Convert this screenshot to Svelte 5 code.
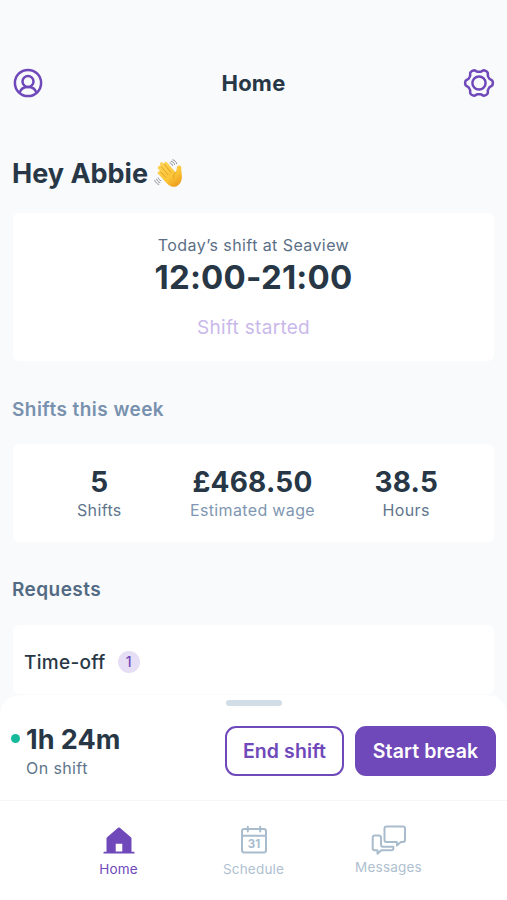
<script lang="ts">
	// Weekly totals
	const stats = [
		{ value: '5', label: 'Shifts', kind: 'shifts' },
		{ value: '£468.50', label: 'Estimated wage', kind: 'wage' },
		{ value: '38.5', label: 'Hours', kind: 'hours' }
	];

	// Six-lobed outline for the settings icon
	function gearPath(cx: number, cy: number, radius: number, depth: number) {
		let d = '';
		for (let i = 0; i < 180; i++) {
			const a = (i / 180) * Math.PI * 2;
			const c = Math.cos(a * 6);
			// flatten the lobes and the notches a little
			const r = radius + depth * Math.tanh(c * 1.6);
			d += `${i ? 'L' : 'M'}${(cx + r * Math.cos(a)).toFixed(2)} ${(cy + r * Math.sin(a)).toFixed(2)}`;
		}
		return d + 'Z';
	}

	const gear = gearPath(16, 16, 12.5, 1.45);
</script>

<div class="app">
	<main class="content">
		<header>
			<button class="icon-button" aria-label="Profile">
				<svg width="32" height="32" viewBox="0 0 32 32">
					<circle cx="16" cy="16" r="13.1" />
					<circle cx="16" cy="14.4" r="5.5" />
					<path d="M7.6 25.6c1.1-3.600 4.300-5.600 8.400-5.600s7.300 2 8.400 5.600" />
				</svg>
			</button>
			<h1>Home</h1>
			<button class="icon-button" aria-label="Settings">
				<svg width="32" height="32" viewBox="0 0 32 32">
					<path d={gear} />
					<circle cx="16" cy="16" r="6.600" />
				</svg>
			</button>
		</header>

		<div class="greeting">
			<h2>Hey Abbie</h2>
			<svg class="wave" width="32" height="30" viewBox="0 0 32 30" role="img" aria-label="Waving hand">
				<defs>
					<linearGradient id="skin" x1="0" y1="0" x2="0.7" y2="1">
						<stop offset="0" stop-color="#ffd65a" />
						<stop offset="0.65" stop-color="#fbc638" />
						<stop offset="1" stop-color="#eda11f" />
					</linearGradient>
				</defs>
				<path
					fill="url(#skin)"
					d="M9.4 20.4 4.2 15.1c-.9-.9-.7-2 .1-2.6.8-.6 1.6-.3 2.3.3L4.3 9.9c-.8-1-.5-2.2.3-2.8.9-.6 1.8-.3 2.5.5L6.3 6.2c-.7-1.1-.4-2.2.4-2.7.9-.6 2-.2 2.6.6l1 1.1c-.4-.9 0-1.8.8-2.2.9-.4 1.8.1 2.4.9l7.3 8.7c.5.6 1.1.5 1.3-.2l.9-4.1c.3-1.4 1.3-2 2.5-1.8 1.2.2 1.900 1.200 1.800 2.500-.2 3.300.6 5.500.6 8.400 0 3.400-1 6.200-3.400 8.500-4.600 4.200-9.800 1.200-15.100-5.500Z"
				/>
				<path class="crease" d="m7.1 7.6 6.9 8.2M10.3 5.2l6.7 8.4M6.6 12.8l5.1 5.5M22.2 12.8c-2.4 1.6-3.3 3.7-2.6 6.2" />
				<path class="motion" d="M17.2 2.2c1.7.3 2.9 1.5 3.3 3.2M19 .8c1.900.6 3.200 2 3.700 3.800M15.900 4c1.400.3 2.200 1.100 2.600 2.400M.8 21.500c.7 2 2.100 3.300 4 3.900M2.600 20.200c.6 1.700 1.700 2.800 3.300 3.400M4.200 18.900c.5 1.400 1.400 2.300 2.700 2.800" />
			</svg>
		</div>

		<section class="card today">
			<p class="place">Today’s shift at Seaview</p>
			<p class="time">12:00-21:00</p>
			<p class="status">Shift started</p>
		</section>

		<h3 class="week-title">Shifts this week</h3>
		<section class="card stats">
			{#each stats as stat}
				<div class="stat {stat.kind}">
					<strong>{stat.value}</strong>
					<span>{stat.label}</span>
				</div>
			{/each}
		</section>

		<h3 class="requests-title">Requests</h3>
		<section class="card request">
			<span class="request-name">Time-off</span>
			<span class="badge">1</span>
		</section>
	</main>

	<section class="sheet">
		<div class="handle"></div>
		<div class="sheet-row">
			<div class="timer">
				<i class="dot"></i>
				<div>
					<strong>1h 24m</strong>
					<span>On shift</span>
				</div>
			</div>
			<button class="action outline">End shift</button>
			<button class="action filled">Start break</button>
		</div>
	</section>

	<nav>
		<a class="tab home" href="#home">
			<svg width="32" height="28" viewBox="0 0 32 28">
				<path
					fill="currentColor"
					fill-rule="evenodd"
					d="M15.1.8a1.4 1.4 0 0 1 1.8 0L27.600 9.900c.6.5.9 1.100.9 1.900v12.900h2.300c.5 0 .7.3.7.8v1.100H.5v-1.100c0-.5.2-.8.7-.8h2.300V11.800c0-.8.3-1.400.9-1.900ZM12.700 16.800v7.700h6.600v-7.700Z"
				/>
			</svg>
			<span>Home</span>
		</a>
		<a class="tab schedule" href="#schedule">
			<svg width="28" height="30" viewBox="0 0 28 30">
				<rect x="2" y="4" width="24" height="23.5" rx="2.2" />
				<path d="M2 10.7h24M7.8 1.800v4.700M20.200 1.800v4.700" />
				<text x="14" y="23.2" text-anchor="middle">31</text>
			</svg>
			<span>Schedule</span>
		</a>
		<a class="tab messages" href="#messages">
			<svg width="36" height="30" viewBox="0 0 36 30">
				<path d="M15.5 1.5h16.500a2 2 0 0 1 2 2v11.500a2 2 0 0 1-2 2h-2.200l-3.900 3.600v-3.600H15.500a2 2 0 0 1-2-2V3.500a2 2 0 0 1 2-2Z" />
				<path d="M8.600 10.500H3.700a2 2 0 0 0-2 2v10.800a2 2 0 0 0 2 2h2.800v3.500l3.900-3.500h10a2 2 0 0 0 2-2v-1.500H12a2 2 0 0 1-2-2V12Z" />
			</svg>
			<span>Messages</span>
		</a>
	</nav>
</div>

<style>
	:global(body) {
		margin: 0;
		background: #f8fafc;
	}

	.app {
		width: 507px;
		height: 900px;
		display: flex;
		flex-direction: column;
		overflow: hidden;
		background: #f8fafc;
		color: #273746;
		font-family: Inter, 'Liberation Sans', sans-serif;
	}

	h1,
	h2,
	h3,
	p {
		margin: 0;
	}

	button {
		font: inherit;
		cursor: pointer;
	}

	.content {
		height: 695px;
		flex: none;
		padding: 66px 12px 0;
		box-sizing: border-box;
		overflow: hidden;
	}

	header {
		display: flex;
		align-items: center;
		justify-content: space-between;
		height: 33px;
	}

	h1 {
		font-size: 22px;
		line-height: 34px;
		font-weight: 650;
		letter-spacing: 0.2px;
	}

	.icon-button {
		padding: 0;
		border: 0;
		background: none;
		display: flex;
	}

	.icon-button svg {
		fill: none;
		stroke: #6f48ba;
		stroke-width: 2.5;
		stroke-linejoin: round;
	}

	/* Greeting */
	.greeting {
		display: flex;
		align-items: center;
		gap: 6px;
		height: 34px;
		margin-top: 58px;
	}

	h2 {
		font-size: 27px;
		line-height: 34px;
		font-weight: 650;
		letter-spacing: 0;
	}

	.crease {
		fill: none;
		stroke: #e29a20;
		stroke-width: 0.9;
		stroke-linecap: round;
	}

	.motion {
		fill: none;
		stroke: #7e8288;
		stroke-width: 0.9;
		stroke-linecap: round;
	}

	/* Cards */
	.card {
		margin: 0 1px;
		background: #fff;
		border-radius: 6px;
		box-sizing: border-box;
	}

	.today {
		height: 148px;
		margin-top: 22px;
		padding-top: 21px;
		text-align: center;
	}

	.place {
		font-size: 16px;
		line-height: 22px;
		letter-spacing: 0.42px;
		color: #5b6f86;
	}

	.time {
		font-size: 33px;
		line-height: 42px;
		font-weight: 700;
		letter-spacing: 0.2px;
	}

	.status {
		margin-top: 17px;
		font-size: 19px;
		line-height: 26px;
		letter-spacing: 0.3px;
		color: #c9b9ea;
	}

	h3 {
		font-size: 19px;
		line-height: 26px;
		font-weight: 600;
		letter-spacing: 0.45px;
	}

	.week-title {
		margin-top: 36px;
		color: #7891ae;
	}

	.requests-title {
		margin-top: 35px;
		color: #526a83;
	}

	.stats {
		height: 98px;
		margin-top: 21px;
		padding: 22px 56px 0 64px;
		display: flex;
		justify-content: space-between;
	}

	.stat {
		display: flex;
		flex-direction: column;
		align-items: center;
	}

	.stat strong {
		font-size: 28px;
		line-height: 32px;
		font-weight: 700;
		letter-spacing: 0.2px;
	}

	.stat span {
		font-size: 16px;
		line-height: 24px;
		letter-spacing: 0.35px;
		color: #60758c;
	}

	.wage {
		margin-left: 9px;
	}

	.wage span {
		color: #7f97b2;
	}

	.request {
		height: 69px;
		margin-top: 22px;
		padding: 5px 11px 0;
		display: flex;
		align-items: center;
		gap: 12px;
	}

	.request-name {
		font-size: 19px;
		font-weight: 550;
		letter-spacing: 0.3px;
	}

	.badge {
		width: 22px;
		height: 22px;
		border-radius: 50%;
		background: #e6def4;
		color: #6f48ba;
		font-size: 14px;
		line-height: 22px;
		font-weight: 500;
		text-align: center;
	}

	/* Current shift */
	.sheet {
		height: 106px;
		flex: none;
		box-sizing: border-box;
		border-bottom: 1px solid #f3f6f8;
		border-radius: 20px 20px 0 0;
		background: #fff;
	}

	.handle {
		width: 56px;
		height: 6px;
		margin: 5px auto 0;
		border-radius: 3px;
		background: #d1dee7;
	}

	.sheet-row {
		display: flex;
		align-items: center;
		margin-top: 17px;
		padding: 0 11px;
	}

	.timer {
		display: flex;
		flex: 1;
		gap: 6px;
	}

	.timer div {
		display: flex;
		flex-direction: column;
	}

	.timer strong {
		font-size: 27px;
		line-height: 34px;
		font-weight: 700;
	}

	.timer span {
		font-size: 16px;
		line-height: 22px;
		letter-spacing: 0.4px;
		color: #60758c;
	}

	.dot {
		width: 9px;
		height: 9px;
		margin-top: 11px;
		border-radius: 50%;
		background: #16b99c;
	}

	.action {
		height: 50px;
		padding: 0;
		border: 2px solid #6f48ba;
		border-radius: 11px;
		font-size: 19.5px;
		font-weight: 600;
		letter-spacing: 0.1px;
		white-space: nowrap;
	}

	.outline {
		width: 119px;
		background: #fff;
		color: #6f48ba;
	}

	.filled {
		width: 141px;
		margin-left: 11px;
		background: #6f48ba;
		color: #fff;
	}

	/* Bottom tabs */
	nav {
		flex: 1;
		display: flex;
		justify-content: center;
		background: #fff;
	}

	.tab {
		width: 135px;
		display: flex;
		flex-direction: column;
		align-items: center;
		color: #afbfd0;
		font-size: 13.5px;
		line-height: 18px;
		letter-spacing: 0.2px;
		text-decoration: none;
	}

	.tab svg {
		flex: none;
	}

	.home {
		padding-top: 26px;
		color: #6f48ba;
	}

	.home span {
		margin-top: 5px;
	}

	.schedule {
		padding-top: 24px;
	}

	.schedule span {
		margin-top: 5px;
	}

	.messages {
		padding-top: 24px;
	}

	.messages span {
		margin-top: 3px;
	}

	.schedule svg,
	.messages svg {
		fill: none;
		stroke: #a9bccd;
		stroke-width: 2;
		stroke-linejoin: round;
		stroke-linecap: round;
	}

	.schedule text {
		fill: #a9bccd;
		stroke: none;
		font-size: 11.5px;
		font-weight: 700;
		letter-spacing: 0;
	}
</style>
